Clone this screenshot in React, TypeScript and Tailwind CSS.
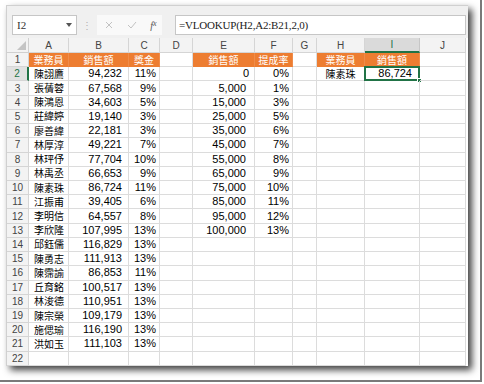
import React from 'react';

type Cell = {
  text?: string;
  align?: 'l' | 'c' | 'r';
  pr?: string;
  head?: boolean;
  cjk?: boolean;
};

const names = [
  ['陳詡鷹', '94,232', '11%'],
  ['張蒨蓉', '67,568', '9%'],
  ['陳鴻恩', '34,603', '5%'],
  ['莊緯婷', '19,140', '3%'],
  ['廖善緯', '22,181', '3%'],
  ['林厚淳', '49,221', '7%'],
  ['林玶伃', '77,704', '10%'],
  ['林禹丞', '66,653', '9%'],
  ['陳素珠', '86,724', '11%'],
  ['江振甫', '39,405', '6%'],
  ['李明信', '64,557', '8%'],
  ['李欣隆', '107,995', '13%'],
  ['邱鈺儒', '116,829', '13%'],
  ['陳勇志', '111,913', '13%'],
  ['陳霈諭', '86,853', '11%'],
  ['丘育銘', '100,517', '13%'],
  ['林浚德', '110,951', '13%'],
  ['陳宗榮', '109,179', '13%'],
  ['施偲瑜', '116,190', '13%'],
  ['洪如玉', '111,103', '13%'],
];

const rates = [
  ['0', '0%'],
  ['5,000', '1%'],
  ['15,000', '3%'],
  ['25,000', '5%'],
  ['35,000', '6%'],
  ['45,000', '7%'],
  ['55,000', '8%'],
  ['65,000', '9%'],
  ['75,000', '10%'],
  ['85,000', '11%'],
  ['95,000', '12%'],
  ['100,000', '13%'],
];

const cols = ['A', 'B', 'C', 'D', 'E', 'F', 'G', 'H', 'I', 'J'];

const headRow: Cell[] = [
  { text: '業務員', head: true },
  { text: '銷售額', head: true },
  { text: '獎金', head: true },
  {},
  { text: '銷售額', head: true },
  { text: '提成率', head: true },
  {},
  { text: '業務員', head: true },
  { text: '銷售額', head: true },
  {},
];

// rows 2..22
const bodyRows: Cell[][] = Array.from({ length: 21 }, (_, i) => {
  const n = names[i];
  const r = rates[i];
  return [
    n ? { text: n[0], align: 'l', cjk: true } : {},
    n ? { text: n[1], align: 'r', pr: 'pr-[6px]' } : {},
    n ? { text: n[2], align: 'r', pr: 'pr-[3px]' } : {},
    {},
    r ? { text: r[0], align: 'r', pr: r[0] === '0' ? 'pr-[5px]' : 'pr-[8px]' } : {},
    r ? { text: r[1], align: 'r', pr: 'pr-[3px]' } : {},
    {},
    i === 0 ? { text: '陳素珠', align: 'c', cjk: true } : {},
    i === 0 ? { text: '86,724', align: 'r', pr: 'pr-[7px]' } : {},
    {},
  ] as Cell[];
});

const allRows = [headRow, ...bodyRows];

function GridCell({ cell, selected }: { cell: Cell; selected?: boolean }) {
  if (cell.head) {
    return (
      <div className="h-[14.23px] flex items-center justify-center bg-[#ed7d31] border-r border-b border-r-[#ef8c4a] border-b-[#ed7d31] text-white text-[10px] leading-none [font-family:'Noto_Sans_CJK_TC',sans-serif]">
        {cell.text}
      </div>
    );
  }
  const justify =
    cell.align === 'r' ? 'justify-end' : cell.align === 'c' ? 'justify-center' : 'justify-start pl-[5px]';
  return (
    <div
      className={`relative h-[14.23px] flex items-center border-r border-b border-[#dcdcdc] text-black leading-none whitespace-nowrap ${justify} ${cell.pr ?? ''} ${
        cell.cjk ? "text-[10px] [font-family:'Noto_Sans_CJK_TC',sans-serif]" : 'text-[11px]'
      }`}
    >
      {cell.text}
      {selected && (
        <>
          <div className="absolute -top-px -left-px -right-px -bottom-px border-2 border-[#217346]" />
          <div className="absolute -right-[3px] -bottom-[3px] w-[5px] h-[5px] bg-[#217346] border border-white" />
        </>
      )}
    </div>
  );
}

function RowHeader({ n }: { n: number }) {
  if (n === 2) {
    return (
      <div className="h-[14.23px] bg-[#e1e1e1] border-r-2 border-r-[#217346] border-b border-[#d5d5d5] flex items-center justify-center text-[10px] text-[#217346]">
        {n}
      </div>
    );
  }
  return (
    <div className="h-[14.23px] bg-[#f3f3f3] border-r border-b border-[#d5d5d5] flex items-center justify-center text-[10px] text-[#444]">
      {n}
    </div>
  );
}

export default function App() {
  return (
    <div className="w-[484px] h-[384px] bg-white overflow-hidden [font-family:'Liberation_Sans','Noto_Sans_CJK_TC',sans-serif]">
      <div className="w-[482px] h-[382px] border-r-2 border-b-2 border-[#7a7a7a] pl-[6px] pt-[5px]">
        <div className="w-[462px] bg-white border-l border-t border-[#d0d0d0] shadow-[4px_4px_7px_rgba(0,0,0,0.75)]">
          {/* Formula bar */}
          <div className="h-[32px] bg-[#f0f0f0] flex items-start pt-[9px] pl-[5px]">
            <div className="w-[65px] h-[20px] bg-white border border-[#c6c6c6] flex items-center justify-between pl-[4px] pr-[4px]">
              <span className="text-[11px] text-[#333] [font-family:'Liberation_Serif',serif]">I2</span>
              <svg width="6" height="4" viewBox="0 0 6 4">
                <path d="M0 0h6L3 4z" fill="#555" />
              </svg>
            </div>
            <div className="w-[20px] h-[20px] flex items-center justify-center text-[#b0b0b0] text-[10px]">⋮</div>
            <div className="w-[65px] h-[20px] bg-[#f9f9f9] flex items-center">
              <div className="w-[20px] ml-[2px] flex justify-center">
                <svg width="8" height="8" viewBox="0 0 8 8">
                  <path d="M1 1l6 6M7 1L1 7" stroke="#c2c2c2" strokeWidth="1" />
                </svg>
              </div>
              <div className="w-[26px] flex justify-center">
                <svg width="10" height="8" viewBox="0 0 10 8">
                  <path d="M1 4l3 3 5-6" stroke="#c2c2c2" strokeWidth="1" fill="none" />
                </svg>
              </div>
              <div className="flex-1 flex justify-center text-[10px] italic text-[#555] [font-family:'Liberation_Serif',serif]">
                f<span className="text-[8px]">x</span>
              </div>
            </div>
            <div className="ml-[13px] w-[291px] h-[20px] bg-white border border-[#c6c6c6] flex items-center pl-[3px]">
              <span className="text-[11px] tracking-[-0.2px] text-[#222] [font-family:'Liberation_Serif',serif]">
                =VLOOKUP(H2,A2:B21,2,0)
              </span>
            </div>
          </div>

          {/* Sheet grid */}
          <div className="grid grid-cols-[22px_40px_60px_31px_33px_62px_38px_24px_48px_55px_46px]">
            <div className="h-[15px] bg-[#f3f3f3] border-r border-b border-[#d0d0d0] flex items-end justify-end pr-[2px] pb-[2px]">
              <svg width="9" height="9" viewBox="0 0 9 9">
                <path d="M9 0v9H0z" fill="#c4c4c4" />
              </svg>
            </div>
            {cols.map((c) =>
              c === 'I' ? (
                <div
                  key={c}
                  className="h-[15px] bg-[#dadada] border-r border-[#c6c6c6] border-b-2 border-b-[#217346] flex items-center justify-center text-[10px] text-[#217346]"
                >
                  {c}
                </div>
              ) : (
                <div
                  key={c}
                  className="h-[15px] bg-[#f3f3f3] border-r border-b border-[#d5d5d5] flex items-center justify-center text-[10px] text-[#444]"
                >
                  {c}
                </div>
              )
            )}
            {allRows.map((row, ri) => (
              <React.Fragment key={ri}>
                <RowHeader n={ri + 1} />
                {row.map((cell, ci) => (
                  <GridCell key={ci} cell={cell} selected={ri === 1 && ci === 8} />
                ))}
              </React.Fragment>
            ))}
          </div>
        </div>
      </div>
    </div>
  );
}
